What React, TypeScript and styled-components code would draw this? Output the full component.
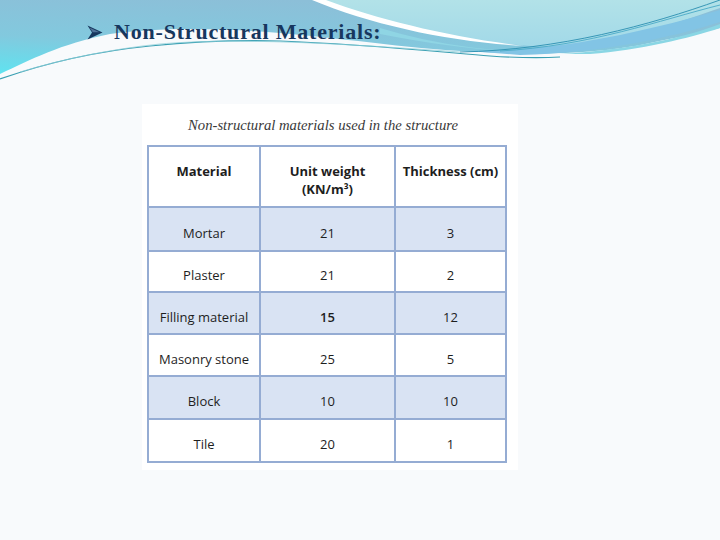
import * as React from "react";
import styled, { createGlobalStyle } from "styled-components";

interface MaterialRow {
  name: string;
  weight: string;
  thickness: string;
  strong?: boolean;
}

const rows: MaterialRow[] = [
  { name: "Mortar", weight: "21", thickness: "3" },
  { name: "Plaster", weight: "21", thickness: "2" },
  { name: "Filling material", weight: "15", thickness: "12", strong: true },
  { name: "Masonry stone", weight: "25", thickness: "5" },
  { name: "Block", weight: "10", thickness: "10" },
  { name: "Tile", weight: "20", thickness: "1" },
];

const GlobalStyle = createGlobalStyle`
  html, body {
    margin: 0;
    padding: 0;
    background: #f8fafc;
  }
`;

const Slide = styled.div`
  width: 720px;
  height: 540px;
  overflow: hidden;
  background: #f8fafc;
  display: flex;
  flex-direction: column;
`;

const Header = styled.header`
  position: relative;
  height: 80px;
  flex: none;
`;

// the wave artwork sits behind the title
const WaveArt = styled.svg`
  position: absolute;
  left: 0;
  top: 0;
  width: 720px;
  height: 80px;
`;

const TitleRow = styled.div`
  position: relative;
  display: flex;
  align-items: center;
  gap: 11px;
  padding: 21px 0 0 87px;
`;

const Title = styled.h1`
  margin: 0;
  font-family: "Liberation Serif", "Times New Roman", serif;
  font-weight: 700;
  font-size: 22px;
  line-height: 22px;
  letter-spacing: 0.8px;
  color: #17375e;
`;

const Body = styled.main`
  padding: 24px 0 0 142px;
`;

const Figure = styled.figure`
  margin: 0;
  width: 376px;
  height: 366px;
  box-sizing: border-box;
  background: #ffffff;
  padding: 13px 11px 0 5px;
  display: flex;
  flex-direction: column;
  align-items: center;
`;

const Caption = styled.figcaption`
  font-family: "Liberation Serif", "Times New Roman", serif;
  font-style: italic;
  font-size: 14.7px;
  line-height: 16px;
  color: #3a3a3a;
  margin: 0 8px 12px 0;
`;

const Grid = styled.div`
  display: grid;
  grid-template-columns: 110px 133px 109px;
  grid-template-rows: 59px 42px 39px 40px 40px 41px 41px;
  gap: 2px;
  padding: 2px;
  background: #95acd3;
  font-family: "Open Sans", "Liberation Sans", sans-serif;
  font-size: 13px;
  color: #1e1e1e;
`;

const HeadCell = styled.div`
  background: #ffffff;
  font-weight: 700;
  text-align: center;
  line-height: 18px;
  padding-top: 15px;
  box-sizing: border-box;
`;

const Cell = styled.div<{ $band: boolean; $strong?: boolean }>`
  background: ${(p) => (p.$band ? "#d9e3f3" : "#ffffff")};
  font-weight: ${(p) => (p.$strong ? 600 : 400)};
  display: flex;
  align-items: center;
  justify-content: center;
  padding-top: 7px;
  box-sizing: border-box;
  white-space: nowrap;
`;

const ArrowBullet = () => (
  <svg width="16" height="15" viewBox="0 0 16 15">
    <path d="M0.5,0.5 L15.5,7.5 L0.5,14.5 L5,7.5 Z" fill="#17375e" />
    <path d="M2.5,2.5 L12.5,7.2 L5.8,7.2 Z" fill="#4f7299" />
  </svg>
);

const Wave = () => (
  <WaveArt viewBox="0 0 720 80" preserveAspectRatio="none">
    <defs>
      <linearGradient id="leftBlue" x1="0.4" y1="0" x2="0" y2="1">
        <stop offset="0" stopColor="#8cbfd8" />
        <stop offset="0.55" stopColor="#82c9de" />
        <stop offset="1" stopColor="#5fe3f0" />
      </linearGradient>
      <linearGradient id="rightPale" x1="0" y1="0" x2="0" y2="1">
        <stop offset="0" stopColor="#b2e2e8" />
        <stop offset="1" stopColor="#a2d9e8" />
      </linearGradient>
    </defs>
    <path
      d="M0,74 C30,60 60,44 110,34 C160,27 220,28 280,33 C350,39 420,50 480,52 C540,55 600,54 650,43 C680,37 700,33 720,28 V0 H0 Z"
      fill="url(#leftBlue)"
    />
    <path d="M380,28 C420,40 460,48 520,52 C480,50 430,44 380,34 Z" fill="#8fd5e4" />
    <path
      d="M318,0 C380,22 450,40 530,46 C600,50 670,25 720,8 V0 Z"
      fill="url(#rightPale)"
    />
    <path
      d="M470,51 C560,52 650,30 720,10 V22 C670,38 600,53 520,55 Z"
      fill="#82c4e5"
    />
    <path
      d="M560,54 C630,50 690,36 720,24 V28 C690,38 640,50 590,54 Z"
      fill="#8ad6e4"
    />
    <path
      d="M312,0 H326 C380,20 450,37 524,46 C450,42 372,25 312,0 Z"
      fill="#ffffff"
    />
    <path
      d="M460,52 C560,50 650,25 720,0"
      stroke="#2a8fb0"
      strokeWidth="0.9"
      fill="none"
    />
    <path
      d="M500,51 C590,46 660,20 720,5"
      stroke="#4aa9c6"
      strokeWidth="0.9"
      fill="none"
    />
    <path
      d="M0,79 C40,65 90,52 150,46 C200,41 240,40 280,41 C360,44 430,51 490,56 C520,58 545,58 560,57"
      stroke="#3a9fb2"
      strokeWidth="1.2"
      fill="none"
    />
    <path
      d="M20,72 C60,60 110,49 160,44 C230,38 320,42 460,52"
      stroke="#8ccfd8"
      strokeWidth="0.7"
      fill="none"
    />
  </WaveArt>
);

export default function App() {
  return (
    <>
      <GlobalStyle />
      <Slide>
        <Header>
          <Wave />
          <TitleRow>
            <ArrowBullet />
            <Title>Non-Structural Materials:</Title>
          </TitleRow>
        </Header>
        <Body>
          <Figure>
            <Caption>Non-structural materials used in the structure</Caption>
            <Grid>
              <HeadCell>Material</HeadCell>
              <HeadCell>
                Unit weight
                <br />
                (KN/m³)
              </HeadCell>
              <HeadCell>Thickness (cm)</HeadCell>
              {rows.map((row, i) => {
                const band = i % 2 === 0;
                return (
                  <React.Fragment key={row.name}>
                    <Cell $band={band}>{row.name}</Cell>
                    <Cell $band={band} $strong={row.strong}>
                      {row.weight}
                    </Cell>
                    <Cell $band={band}>{row.thickness}</Cell>
                  </React.Fragment>
                );
              })}
            </Grid>
          </Figure>
        </Body>
      </Slide>
    </>
  );
}
